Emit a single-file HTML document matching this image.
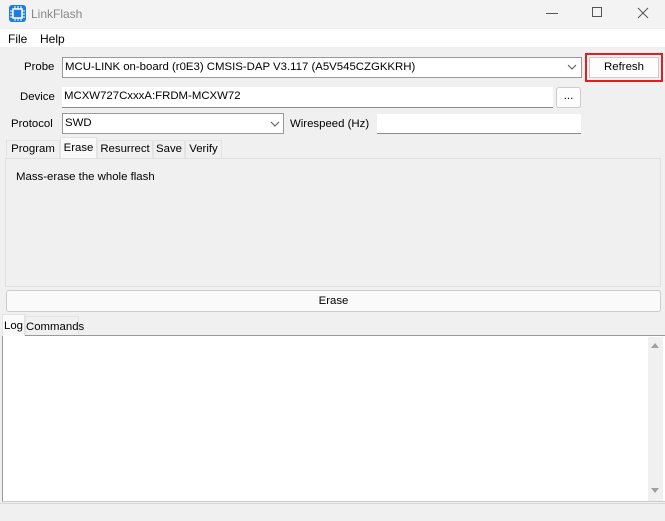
<!DOCTYPE html>
<html><head><style>
*{box-sizing:border-box;margin:0;padding:0}
body{width:665px;height:521px;background:#f0f0f0;font-family:"Liberation Sans",sans-serif;font-size:11.4px;color:#000;position:relative;overflow:hidden}
.a{position:absolute}
.inp{position:absolute;background:#fff;border:1px solid #d0d0d0;border-bottom:1px solid #8a8a8a;padding:2px 2px;line-height:15px;white-space:nowrap}
.tab{position:absolute;top:140px;height:18px;background:#f0f0f0;border:1px solid #e3e3e3;border-bottom:none;line-height:17px;text-align:center;white-space:nowrap}
</style></head><body>
<div class="a" style="left:0;top:0;width:665px;height:28px;background:#f3f3f3"></div>
<svg class="a" style="left:9px;top:5px" width="17" height="17" viewBox="0 0 17 17"><rect x="0" y="0" width="17" height="17" rx="3" fill="#1e7be0"/><rect x="4" y="4" width="9" height="9" fill="none" stroke="#fff" stroke-width="1.5"/><path d="M6 1v3M9 1v3M12 1v3M6 13v3M9 13v3M12 13v3M1 6h3M1 9h3M1 12h3M13 6h3M13 9h3M13 12h3" stroke="#fff"/></svg>
<div class="a" style="left:31px;top:7px;color:#888;font-size:12px">LinkFlash</div>
<div class="a" style="left:546px;top:13px;width:12px;height:1px;background:#555"></div>
<div class="a" style="left:592px;top:7px;width:10px;height:10px;border:1px solid #555"></div>
<svg class="a" style="left:637px;top:7px" width="12" height="12"><path d="M1 1L11 11M11 1L1 11" stroke="#555"/></svg>
<div class="a" style="left:0;top:29px;width:665px;height:18px;background:#fff"></div>
<div class="a" style="left:8px;top:32px;font-size:12px">File</div>
<div class="a" style="left:40px;top:32px;font-size:12px">Help</div>

<div class="a" style="left:24px;top:61px">Probe</div>
<div class="inp" style="left:62px;top:57px;width:520px;height:21px;border:1px solid #999;">MCU-LINK on-board (r0E3) CMSIS-DAP V3.117 (A5V545CZGKKRH)</div>
<svg class="a" style="left:567px;top:64px" width="10" height="6"><path d="M1 1l4 4l4-4" fill="none" stroke="#555"/></svg>
<div class="a" style="left:585px;top:53px;width:78px;height:29px;border:2px solid #e02020;padding:2px"><div style="width:100%;height:100%;background:#fdfdfd;border:1px solid #ccc;text-align:center;line-height:19px">Refresh</div></div>

<div class="a" style="left:20px;top:91px">Device</div>
<div class="inp" style="left:62px;top:87px;width:491px;height:21px;border:none;border-bottom:1px solid #8a8a8a">MCXW727CxxxA:FRDM-MCXW72</div>
<div class="a" style="left:556px;top:87px;width:25px;height:21px;background:#fdfdfd;border:1px solid #ccc;border-radius:3px;text-align:center;line-height:17px">...</div>

<div class="a" style="left:11px;top:118px">Protocol</div>
<div class="inp" style="left:62px;top:113px;width:222px;height:21px;border:1px solid #999">SWD</div>
<svg class="a" style="left:270px;top:121px" width="10" height="6"><path d="M1 1l4 4l4-4" fill="none" stroke="#555"/></svg>
<div class="a" style="left:290px;top:118px">Wirespeed (Hz)</div>
<div class="inp" style="left:377px;top:114px;width:204px;height:20px;border:none;border-bottom:1px solid #8a8a8a"></div>

<div class="tab" style="left:6px;width:54px">Program</div>
<div class="tab" style="left:60px;width:37px;top:137px;height:21px;background:#f9f9f9;line-height:20px;z-index:2">Erase</div>
<div class="tab" style="left:97px;width:56px">Resurrect</div>
<div class="tab" style="left:153px;width:32px">Save</div>
<div class="tab" style="left:185px;width:37px">Verify</div>
<div class="a" style="left:5px;top:158px;width:656px;height:129px;border:1px solid #e0e0e0;background:#f0f0f0"></div>
<div class="a" style="left:16px;top:171px">Mass-erase the whole flash</div>

<div class="a" style="left:6px;top:290px;width:655px;height:22px;background:#fafafa;border:1px solid #ccc;border-radius:3px;text-align:center;line-height:20px">Erase</div>

<div class="tab" style="left:2px;top:314px;width:23px;height:22px;background:#fafafa;line-height:22px;z-index:2">Log</div>
<div class="tab" style="left:25px;top:316px;width:54px;height:20px;line-height:21px">Commands</div>
<div class="a" style="left:2px;top:335px;width:663px;height:167px;background:#fff;border-top:1px solid #999;border-left:1px solid #999;border-bottom:1px solid #ccc"></div>
<div class="a" style="left:648px;top:337px;width:15px;height:164px;background:#f0f0f0"></div>
<svg class="a" style="left:650px;top:341px" width="10" height="8"><path d="M1 7L5 2L9 7Z" fill="#a0a0a0"/></svg>
<svg class="a" style="left:650px;top:487px" width="10" height="8"><path d="M1 1L5 6L9 1Z" fill="#a0a0a0"/></svg>
<div class="a" style="left:0;top:503px;width:665px;height:1px;background:#d8d8d8"></div>
</body></html>
